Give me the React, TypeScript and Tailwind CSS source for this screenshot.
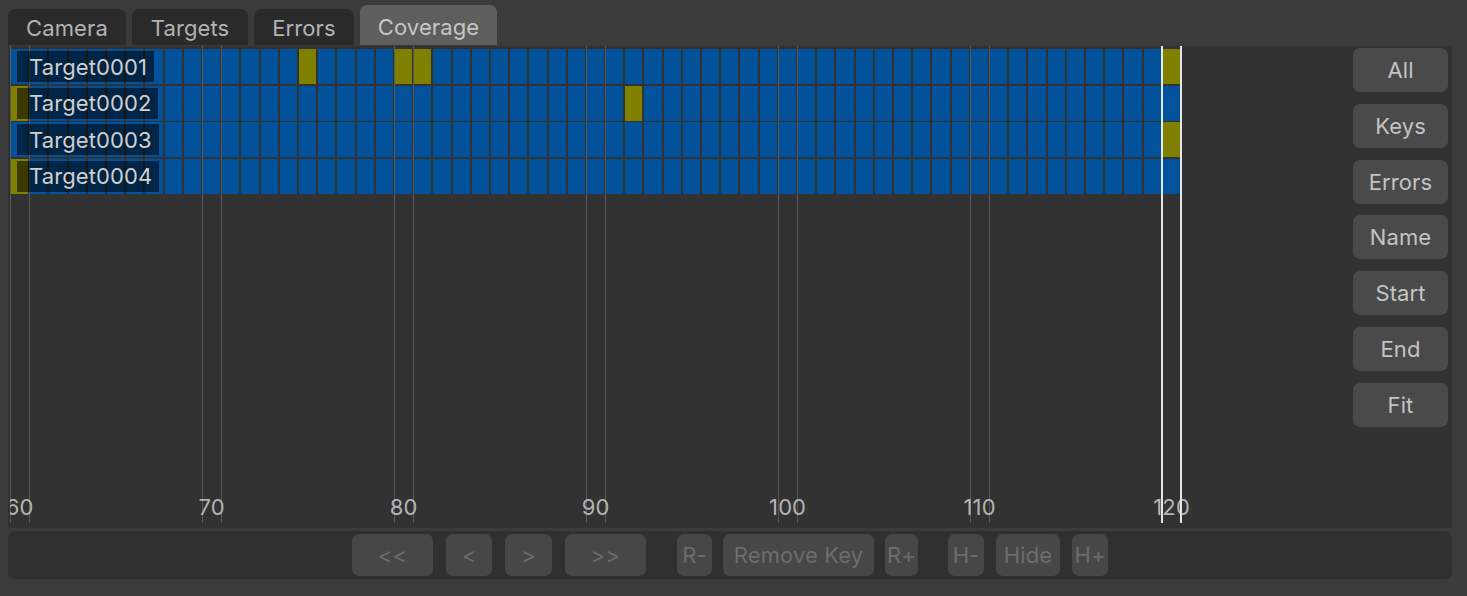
import React from "react";

const PITCH = 19.2;
const FRAMES = Array.from({ length: 61 }, (_, i) => 60 + i);

const ROWS = [
  { name: "Target0001", yellow: [75, 80, 81, 120] },
  { name: "Target0002", yellow: [60, 92] },
  { name: "Target0003", yellow: [120] },
  { name: "Target0004", yellow: [60] },
];

const TICKS = [60, 70, 80, 90, 100, 110];

const TABS = [
  { label: "Camera", w: "w-[118px]", active: false },
  { label: "Targets", w: "w-[116px]", active: false },
  { label: "Errors", w: "w-[100px]", active: false },
  { label: "Coverage", w: "w-[137px]", active: true },
];

const SIDE = ["All", "Keys", "Errors", "Name", "Start", "End", "Fit"];

function Tab({ label, w, active }: { label: string; w: string; active: boolean }) {
  return (
    <div
      className={
        active
          ? `${w} h-[40px] rounded-t-[7px] bg-[#5e5e5e] text-[#c6c6c6] flex items-center justify-center pt-[4px]`
          : `${w} h-[36px] rounded-t-[7px] bg-[#2a2a2a] text-[#b3b3b3] flex items-center justify-center pt-[3px]`
      }
    >
      {label}
    </div>
  );
}

function BarButton({ label, w }: { label: string; w: string }) {
  return (
    <div
      className={`${w} h-[42px] rounded-[7px] bg-[#474747] text-[#6c6c6c] flex items-center justify-center`}
    >
      {label}
    </div>
  );
}

export default function App() {
  const lines: { x: number }[] = [];
  TICKS.forEach((f) => {
    lines.push({ x: (f - 60) * PITCH });
    lines.push({ x: (f - 59) * PITCH });
  });

  return (
    <div
      className="w-[1467px] h-[596px] bg-[#3b3b3b] flex flex-col text-[22px] tracking-[0.1px] overflow-hidden"
      style={{ fontFamily: "Inter, 'Noto Sans', sans-serif" }}
    >
      {/* Tabs */}
      <div className="h-[45px] flex items-end gap-[6px] pl-[8px] shrink-0">
        {TABS.map((t) => (
          <Tab key={t.label} {...t} />
        ))}
      </div>

      {/* Main panel */}
      <div className="ml-[8px] w-[1444px] h-[482px] mt-[1px] bg-[#323232] flex pl-[2px] shrink-0">
        {/* Timeline */}
        <div className="relative w-[1330px] h-full overflow-hidden">
          {/* grid lines */}
          {lines.map((l, i) => (
            <div
              key={i}
              className="absolute top-0 bottom-[5px] w-[1px] bg-[#585858]"
              style={{ left: l.x - 0.5 }}
            />
          ))}

          {/* rows */}
          <div className="relative z-10 ml-[1px] mt-[3px] w-[1169px] flex flex-col gap-y-[1.5px]">
            {ROWS.map((r) => (
              <div key={r.name} className="relative h-[35px]">
                <div className="grid grid-cols-[repeat(61,minmax(0,1fr))] gap-x-[2px] h-full">
                  {FRAMES.map((f) => (
                    <div
                      key={f}
                      className={r.yellow.includes(f) ? "bg-[#7f7f00]" : "bg-[#02529b]"}
                    />
                  ))}
                </div>
                <div className="absolute left-[6px] top-[2px] bottom-[2px] bg-black/55 flex items-center pl-[12px] pr-[7px] text-[#d0d0d0] leading-none">
                  {r.name}
                </div>
              </div>
            ))}
          </div>

          {/* tick labels */}
          {TICKS.concat([120]).map((f) => (
            <div
              key={f}
              className="absolute bottom-[9px] -translate-x-1/2 text-[#b4b4b4] leading-[24px] z-10"
              style={{ left: (f - 60) * PITCH + 9.6 }}
            >
              {f}
            </div>
          ))}

          {/* current frame markers */}
          <div
            className="absolute top-0 bottom-[5px] w-[2px] bg-[#e6e6e6] z-20"
            style={{ left: 60 * PITCH - 1 }}
          />
          <div
            className="absolute top-0 bottom-[5px] w-[2px] bg-[#e6e6e6] z-20"
            style={{ left: 61 * PITCH - 1 }}
          />
        </div>

        {/* Side buttons */}
        <div className="ml-auto mr-[4px] mt-[2px] flex flex-col gap-[11.8px]">
          {SIDE.map((s) => (
            <div
              key={s}
              className="w-[95px] h-[44px] rounded-[7px] bg-[#4a4a4a] text-[#c3c3c3] flex items-center justify-center pt-[1px]"
            >
              {s}
            </div>
          ))}
        </div>
      </div>

      {/* Bottom bar */}
      <div className="ml-[8px] w-[1444px] h-[48px] mt-[3px] rounded-[7px] bg-[#303030] flex items-center justify-center shrink-0">
        <div className="flex items-center gap-[13px]">
          <BarButton label="<<" w="w-[81px]" />
          <BarButton label="<" w="w-[46px]" />
          <BarButton label=">" w="w-[47px]" />
          <BarButton label=">>" w="w-[81px]" />
        </div>
        <div className="flex items-center gap-[11px] ml-[31px]">
          <BarButton label="R-" w="w-[35px]" />
          <BarButton label="Remove Key" w="w-[151px]" />
          <BarButton label="R+" w="w-[33px]" />
        </div>
        <div className="flex items-center gap-[12px] ml-[30px]">
          <BarButton label="H-" w="w-[36px]" />
          <BarButton label="Hide" w="w-[64px]" />
          <BarButton label="H+" w="w-[36px]" />
        </div>
      </div>
    </div>
  );
}
